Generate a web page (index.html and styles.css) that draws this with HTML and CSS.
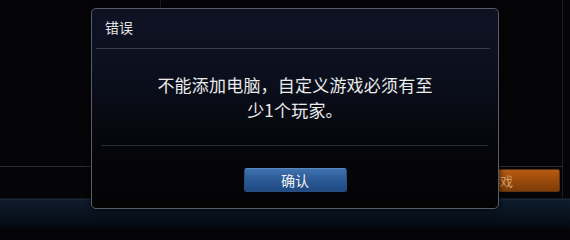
FILE: index.html
```html
<!DOCTYPE html>
<html lang="zh-CN">
<head>
<meta charset="utf-8">
<title>错误</title>
<link rel="stylesheet" href="styles.css">
</head>
<body>
<div class="stage">
  <div class="scene">
    <div class="main">
      <div class="pane">
        <div class="toprow"><div class="topcell"></div></div>
        <div class="spacer"></div>
        <div class="footrow">
          <button class="btn-orange">开始游戏</button>
        </div>
      </div>
      <div class="gutter"></div>
    </div>
    <div class="band"></div>
  </div>

  <div class="dialog">
    <div class="dlg-title">错误</div>
    <div class="dlg-sep"></div>
    <p class="dlg-msg">不能添加电脑，自定义游戏必须有至少1个玩家。</p>
    <div class="dlg-sep2"></div>
    <div class="dlg-actions">
      <button class="btn-blue">确认</button>
    </div>
  </div>
</div>
</body>
</html>
```
FILE: styles.css
```css
html, body {
  margin: 0;
  padding: 0;
  background: #050508;
}
.stage {
  position: relative;
  width: 570px;
  height: 228px;
  overflow: hidden;
  font-family: "Noto Sans CJK SC", "Noto Sans", sans-serif;
  background: #050508;
}
.scene {
  display: flex;
  flex-direction: column;
  height: 228px;
}
.main {
  display: flex;
  height: 198px;
  border-bottom: 1px solid #15171d;
}
.pane {
  width: 562px;
  display: flex;
  flex-direction: column;
  border-right: 1px solid #1d2027;
}
.toprow {
  height: 40px;
  display: flex;
}
.topcell {
  width: 160px;
  border-right: 1px solid #1b1d24;
}
.spacer {
  flex: 1;
}
.footrow {
  height: 32px;
  border-top: 1px solid #2c2e35;
  display: flex;
  justify-content: flex-end;
  align-items: flex-start;
  padding-top: 2px;
  padding-right: 2px;
  box-sizing: border-box;
}
.btn-orange {
  width: 146px;
  height: 23px;
  border: 1px solid #5c3510;
  border-radius: 2px;
  background: linear-gradient(#b65c12, #9a4a0b 50%, #7e3c08);
  color: rgba(230, 190, 140, 0.75);
  font-family: inherit;
  font-size: 13px;
  padding: 0;
}
.gutter {
  flex: 1;
}
.band {
  flex: 1;
  background: linear-gradient(#0f1c2e, #0a1420 45%, #05080e);
  border-top: 1px solid #18263a;
}

.dialog {
  position: absolute;
  left: 91px;
  top: 8px;
  width: 408px;
  height: 201px;
  box-sizing: border-box;
  border: 1px solid #5a5d66;
  border-radius: 5px;
  background: linear-gradient(#0e1223 0%, #0b0f1d 35%, #06070c 65%, #030304 100%);
  display: flex;
  flex-direction: column;
  box-shadow: 0 0 6px rgba(0, 0, 0, 0.8);
}
.dlg-title {
  height: 39px;
  box-sizing: border-box;
  padding: 8px 0 0 13px;
  font-size: 14px;
  line-height: 20px;
  color: #e4e4e4;
}
.dlg-sep {
  height: 1px;
  margin: 0 8px 0 4px;
  background: #383c47;
}
.dlg-msg {
  margin: 23px auto 0;
  width: 282px;
  text-align: center;
  font-size: 17px;
  line-height: 25px;
  letter-spacing: 0.2px;
  color: #ececec;
}
.dlg-sep2 {
  height: 1px;
  margin: 23px 10px 0 9px;
  background: #2a2c33;
}
.dlg-actions {
  display: flex;
  justify-content: center;
  padding-top: 22px;
}
.btn-blue {
  width: 103px;
  height: 24px;
  box-sizing: border-box;
  border: 1px solid #2a4e80;
  border-top-color: #5a86c0;
  border-radius: 3px;
  background: linear-gradient(#4072b0, #2d5c98 45%, #1f4a82 100%);
  color: #f2f2f2;
  font-family: inherit;
  font-size: 14px;
  line-height: 20px;
  padding: 0;
}
```
